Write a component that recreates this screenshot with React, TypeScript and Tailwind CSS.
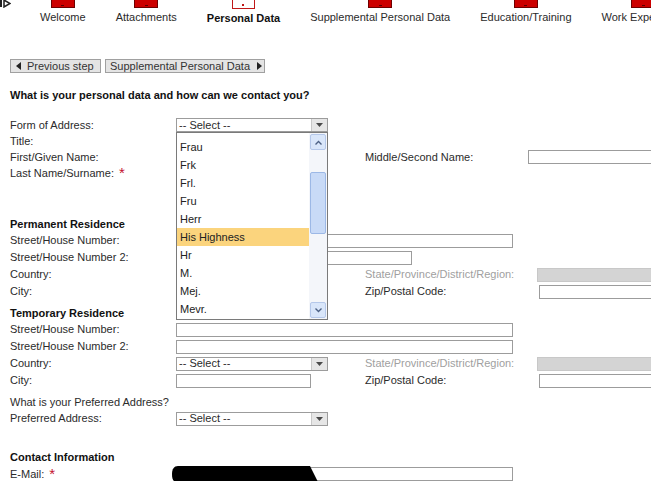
import React from 'react';

const steps = [
  { label: 'Welcome', state: 'done' },
  { label: 'Attachments', state: 'done' },
  { label: 'Personal Data', state: 'current' },
  { label: 'Supplemental Personal Data', state: 'todo' },
  { label: 'Education/Training', state: 'todo' },
  { label: 'Work Experience', state: 'todo' },
];

const titles = ['Dr.', 'Frau', 'Frk', 'Frl.', 'Fru', 'Herr', 'His Highness', 'Hr', 'M.', 'Mej.', 'Mevr.'];

function Arrow({ dir }: { dir: 'left' | 'right' | 'down' }) {
  if (dir === 'down')
    return (
      <svg width="7" height="4" viewBox="0 0 7 4">
        <path d="M0 0h7L3.5 4z" fill="#4a4a4a" />
      </svg>
    );
  return (
    <svg width="5" height="8" viewBox="0 0 5 8">
      <path d={dir === 'left' ? 'M5 0v8L0 4z' : 'M0 0v8l5-4z'} fill="#222" />
    </svg>
  );
}

function Select() {
  return (
    <div className="flex h-[14px] w-[152px] items-center border border-[#9c9c9c] bg-white">
      <span className="flex-1 pl-[2px] text-[11px] leading-[11px]">-- Select --</span>
      <span className="flex h-full w-[16px] items-center justify-center border-l border-[#c8c8c8] bg-[#e6e6e6]">
        <Arrow dir="down" />
      </span>
    </div>
  );
}

function Row({ label, children, tall = true }: { label: React.ReactNode; children?: React.ReactNode; tall?: boolean }) {
  return (
    <div className={`flex items-center ${tall ? 'h-[17px]' : 'h-[16px]'}`}>
      <div className="w-[166px] shrink-0">{label}</div>
      {children}
    </div>
  );
}

function Star() {
  return <span className="relative top-[1px] ml-[5px] text-[15px] leading-none text-[#c4122f]">*</span>;
}

function ScrollBtn({ up }: { up: boolean }) {
  return (
    <div className="flex h-[16px] items-center justify-center rounded-[2px] border border-[#b5c8ea] bg-[#d9e6fa]">
      <svg width="7" height="5" viewBox="0 0 7 5">
        <path d={up ? 'M0.5 4.5L3.5 1.5 6.5 4.5' : 'M0.5 0.5L3.5 3.5 6.5 0.5'} stroke="#4d6185" strokeWidth="1.4" fill="none" />
      </svg>
    </div>
  );
}

export default function App() {
  return (
    <div className="relative h-[481px] w-[651px] overflow-hidden bg-white font-['Liberation_Sans',Arial,sans-serif] text-[11px] text-[#2b2b2b]">
      {/* wizard steps */}
      <div className="flex whitespace-nowrap">
        <div className="w-[25px] shrink-0">
          <svg width="11" height="8" viewBox="0 0 11 8">
            <rect x="0" y="0" width="2" height="7" fill="#222" />
            <path d="M4 0v7l6-3.5z" fill="none" stroke="#222" strokeWidth="1.5" />
          </svg>
        </div>
        {steps.map((s) => (
          <div key={s.label} className="flex shrink-0 flex-col items-center px-[15px]">
            {s.state === 'current' ? (
              <div className="flex h-[9px] w-[23px] items-end justify-center border border-t-0 border-[#c01818] bg-white">
                <span className="mb-[2px] h-[2px] w-[2px] bg-[#c01818]" />
              </div>
            ) : (
              <div className="flex h-[8px] w-[24px] items-end justify-center border border-t-0 border-[#6e0000] bg-[#cc0000]">
                <span className="mb-[1px] h-[1px] w-[3px] bg-[#5a0000]" />
              </div>
            )}
            <span className={`mt-[2px] leading-[14px] ${s.state === 'current' ? 'font-bold text-[#111]' : ''}`}>
              {s.label}
            </span>
          </div>
        ))}
      </div>

      {/* step navigation */}
      <div className="ml-[10px] mt-[34px] flex gap-[4px]">
        <button className="flex h-[14px] w-[91px] items-center gap-[6px] border border-[#a0a0a0] bg-[#e4e4e4] pl-[5px] text-[11px] leading-[12px] text-[#333]">
          <Arrow dir="left" />
          Previous step
        </button>
        <button className="flex h-[14px] w-[160px] items-center gap-[7px] border border-[#a0a0a0] bg-[#e4e4e4] pl-[4px] text-[11px] leading-[12px] text-[#333]">
          Supplemental Personal Data
          <Arrow dir="right" />
        </button>
      </div>

      <div className="ml-[10px] mt-[15px] font-bold leading-[14px] text-[#111]">
        What is your personal data and how can we contact you?
      </div>

      {/* form */}
      <div className="ml-[10px] mt-[15px]">
        <Row label="Form of Address:" tall={false}>
          <div className="relative">
            <Select />
            {/* open dropdown list */}
            <div className="absolute left-0 top-[14px] z-10 flex h-[188px] w-[152px] border border-[#7a7a7a] bg-white">
              <div className="relative flex-1 overflow-hidden">
                <div className="absolute left-0 right-0 top-[-13px]">
                  {titles.map((t) => (
                    <div
                      key={t}
                      className={`flex h-[18px] items-center pl-[3px] text-[11px] text-[#222] ${t === 'His Highness' ? 'bg-[#fbd47d]' : ''}`}
                    >
                      {t}
                    </div>
                  ))}
                </div>
              </div>
              <div className="flex w-[18px] flex-col bg-[#f4f6fa] p-[1px]">
                <ScrollBtn up />
                <div className="mt-[22px] h-[62px] rounded-[2px] border border-[#9cb8e6] bg-[#c8daf7]" />
                <div className="flex-1" />
                <ScrollBtn up={false} />
              </div>
            </div>
          </div>
        </Row>
        <Row label="Title:" tall={false} />
        <Row label="First/Given Name:" tall={false}>
          <div className="w-[189px] shrink-0" />
          <div className="w-[163px] shrink-0">Middle/Second Name:</div>
          <div className="h-[14px] w-[140px] shrink-0 border border-[#9c9c9c] bg-white" />
        </Row>
        <Row
          label={
            <>
              Last Name/Surname:
              <Star />
            </>
          }
          tall={false}
        />

        <div className="mt-[35px] h-[16px] font-bold leading-[16px] text-[#111]">Permanent Residence</div>
        <Row label="Street/House Number:">
          <div className="h-[14px] w-[337px] shrink-0 border border-[#9c9c9c] bg-white" />
        </Row>
        <Row label="Street/House Number 2:">
          <div className="h-[14px] w-[236px] shrink-0 border border-[#9c9c9c] bg-white" />
        </Row>
        <Row label="Country:">
          <div className="w-[189px] shrink-0">
            <Select />
          </div>
          <div className="w-[172px] shrink-0 text-[#a0a0a0]">State/Province/District/Region:</div>
          <div className="h-[14px] w-[130px] shrink-0 border border-[#c8c8c8] bg-[#d4d4d4]" />
        </Row>
        <Row label="City:">
          <div className="w-[189px] shrink-0">
            <div className="h-[14px] w-[135px] border border-[#9c9c9c] bg-white" />
          </div>
          <div className="w-[174px] shrink-0">Zip/Postal Code:</div>
          <div className="h-[14px] w-[130px] shrink-0 border border-[#9c9c9c] bg-white" />
        </Row>

        <div className="mt-[5px] h-[16px] font-bold leading-[16px] text-[#111]">Temporary Residence</div>
        <Row label="Street/House Number:">
          <div className="h-[14px] w-[337px] shrink-0 border border-[#9c9c9c] bg-white" />
        </Row>
        <Row label="Street/House Number 2:">
          <div className="h-[14px] w-[337px] shrink-0 border border-[#9c9c9c] bg-white" />
        </Row>
        <Row label="Country:">
          <div className="w-[189px] shrink-0">
            <Select />
          </div>
          <div className="w-[172px] shrink-0 text-[#a0a0a0]">State/Province/District/Region:</div>
          <div className="h-[14px] w-[130px] shrink-0 border border-[#c8c8c8] bg-[#d4d4d4]" />
        </Row>
        <Row label="City:">
          <div className="w-[189px] shrink-0">
            <div className="h-[14px] w-[135px] border border-[#9c9c9c] bg-white" />
          </div>
          <div className="w-[174px] shrink-0">Zip/Postal Code:</div>
          <div className="h-[14px] w-[130px] shrink-0 border border-[#9c9c9c] bg-white" />
        </Row>

        <div className="mt-[5px] h-[16px] leading-[16px]">What is your Preferred Address?</div>
        <Row label="Preferred Address:">
          <Select />
        </Row>

        <div className="mt-[22px] h-[16px] font-bold leading-[16px] text-[#111]">Contact Information</div>
        <Row
          label={
            <>
              E-Mail:
              <Star />
            </>
          }
        >
          <div className="relative h-[14px] w-[337px] shrink-0 border border-[#9c9c9c] bg-white">
            <svg className="absolute left-[-5px] top-[-2px]" width="147" height="16" viewBox="0 0 147 16">
              <path d="M6 0H138L146 16H5C1 16 0 13 0 8S2 0 6 0z" fill="#000" />
            </svg>
          </div>
        </Row>
      </div>
    </div>
  );
}
